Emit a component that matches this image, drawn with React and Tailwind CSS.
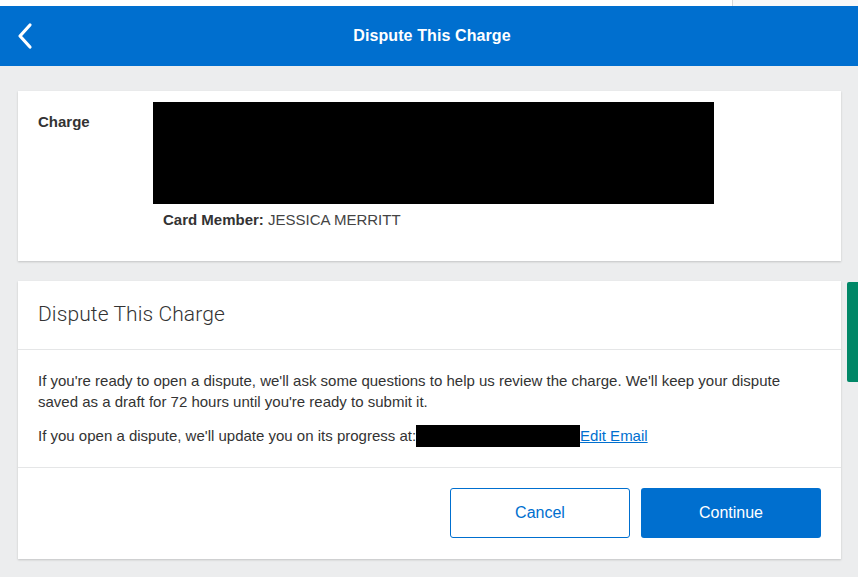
import React from 'react';

function BackChevron() {
    return (
        <svg width="20" height="28" viewBox="0 0 20 28" className="block">
            <path d="M14 3 L4 14 L14 25" fill="none" stroke="#ffffff" strokeWidth="3.2" strokeLinecap="round" strokeLinejoin="round" />
        </svg>
    );
}

export default function App() {
    return (
        <div className="relative w-[858px] h-[577px] overflow-hidden bg-[#ecedee] text-[#333333] font-['Liberation_Sans',Arial,sans-serif]">
            {/* browser strip */}
            <div className="flex h-[6px]">
                <div className="w-[733px] bg-white border-r border-[#d6d7d8]" />
                <div className="flex-1 bg-[#f7f8f9]" />
            </div>

            {/* header */}
            <div className="relative h-[60px] bg-[#006fcf] flex items-center justify-center">
                <button className="absolute left-[16px] top-[16px]" aria-label="Back">
                    <BackChevron />
                </button>
                <h1 className="text-white text-[16px] font-bold tracking-[0.1px] ml-[6px]">Dispute This Charge</h1>
            </div>

            <div className="pl-[18px] pr-[17px] pt-[25px]">
                {/* charge card */}
                <div className="bg-white shadow-[0_1px_2px_rgba(0,0,0,0.18)] pt-[11px] pb-[31px] px-[20px] flex">
                    <div className="w-[115px] mt-[10px] text-[15px] leading-[20px] font-bold">Charge</div>
                    <div>
                        <div className="w-[561px] h-[102px] bg-black" />
                        <div className="mt-[6px] ml-[10px] text-[15px] leading-[20px]">
                            <span className="font-bold">Card Member:</span> <span className="text-[#444444]">JESSICA MERRITT</span>
                        </div>
                    </div>
                </div>

                {/* dispute card */}
                <div className="mt-[20px] bg-white shadow-[0_1px_2px_rgba(0,0,0,0.18)]">
                    <div className="h-[69px] px-[20px] flex items-center border-b border-[#e5e6e7]">
                        <h2 className="text-[21px] font-light font-['Roboto',sans-serif] text-[#333333] tracking-[0.1px]">Dispute This Charge</h2>
                    </div>
                    <div className="px-[20px] pt-[20px] pb-[20px] border-b border-[#e5e6e7] text-[15px]">
                        <p className="leading-[21px]">
                            If you're ready to open a dispute, we'll ask some questions to help us review the charge. We'll keep your dispute saved as a draft for 72 hours until you're ready to submit it.
                        </p>
                        <div className="mt-[13px] flex items-center leading-[22px]">
                            <span>If you open a dispute, we'll update you on its progress at:</span>
                            <span className="inline-block w-[164px] h-[22px] bg-black" />
                            <a href="#" className="text-[#006fcf] underline">Edit Email</a>
                        </div>
                    </div>
                    <div className="px-[20px] pt-[20px] pb-[21px] flex justify-end gap-[11px]">
                        <button className="w-[180px] h-[50px] rounded-[3px] border border-[#006fcf] bg-white text-[#006fcf] text-[16px]">Cancel</button>
                        <button className="w-[180px] h-[50px] rounded-[3px] bg-[#006fcf] text-white text-[16px] font-medium">Continue</button>
                    </div>
                </div>
            </div>

            {/* feedback tab */}
            <div className="absolute right-0 top-[282px] w-[11px] h-[100px] bg-[#008767] rounded-tl-[2px] rounded-bl-[2px]" />
        </div>
    );
}
